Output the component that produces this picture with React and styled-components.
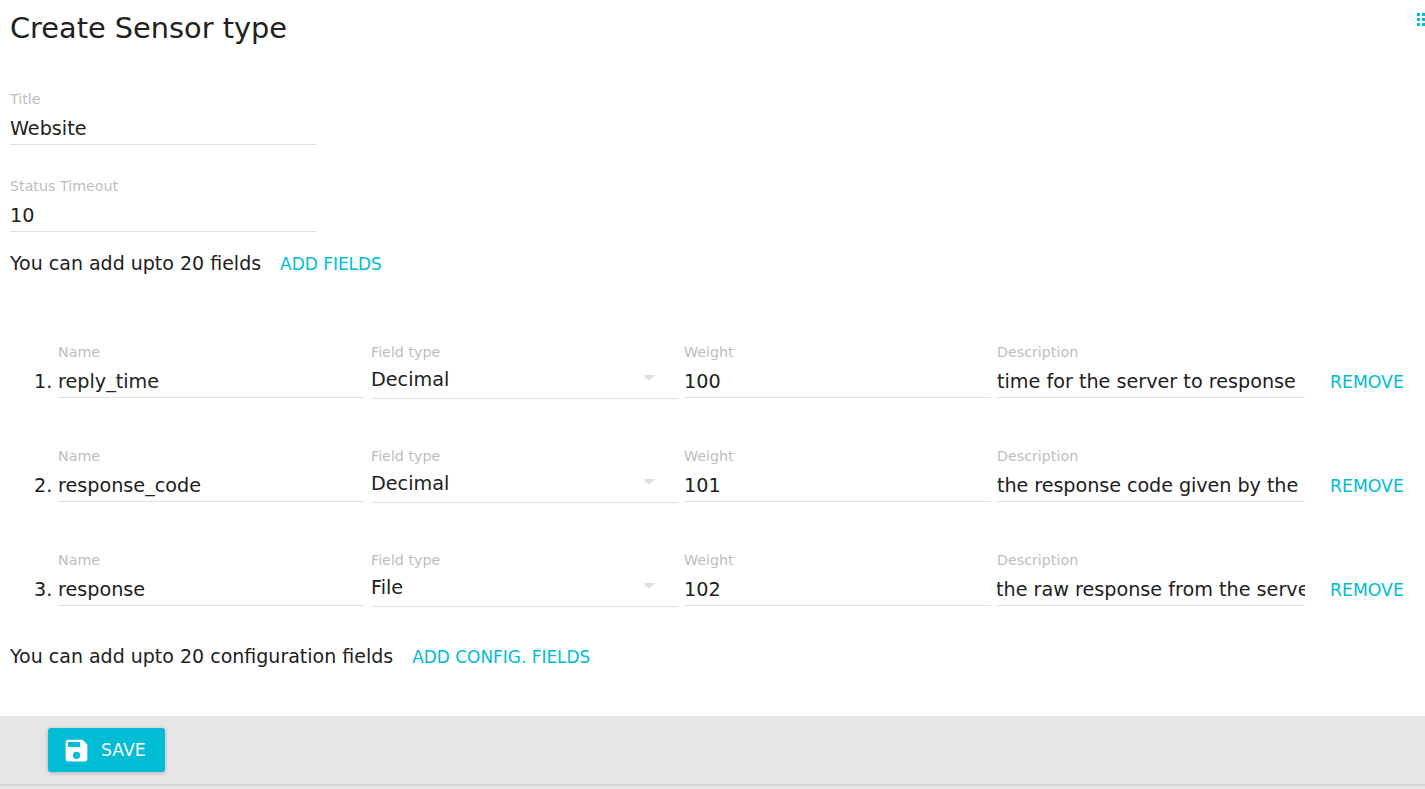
import React from "react";
import styled, { createGlobalStyle } from "styled-components";

const Global = createGlobalStyle`
  html, body { margin: 0; padding: 0; background: #fff; }
  body { font-family: "DejaVu Sans", sans-serif; color: #212121; overflow: hidden; }
`;
const Page = styled.div`
  width: 1425px; height: 789px; display: flex; flex-direction: column; position: relative; overflow: hidden;
`;
const Content = styled.div`
  height: 716px; padding: 0 10px; box-sizing: border-box; flex: none;
`;
const Heading = styled.h1`
  margin: 0; padding-top: 8px; height: 91px; box-sizing: border-box; font-size: 28.8px; line-height: 40px; font-weight: 400; color: #212121;
`;
const Field = styled.div`
  width: ${p => p.$w}px; flex: none; height: ${p => p.$h || 54}px;
`;
const Label = styled.div`
  font-size: 14.25px; line-height: 16px; color: #bdbdbd; height: 16px; white-space: nowrap;
`;
const Value = styled.div`
  font-size: 19.2px; line-height: 26px; color: #212121; white-space: nowrap; overflow: hidden;
  border-bottom: 1px solid #e0e0e0; position: relative; box-sizing: content-box;
  margin-top: ${p => p.$select ? 6 : 8}px;
  padding-top: 1px;
  height: ${p => p.$select ? 31 : 28}px;
  text-indent: ${p => p.$indent || 0}px;
  letter-spacing: ${p => p.$tracking || 0}px;
`;
const Spacer = styled.div` height: ${p => p.$h}px; `;
const Line = styled.div`
  display: flex; align-items: center; height: 40px; font-size: 19px;
`;
const Link = styled.span`
  color: #00bcd4; font-size: 16.95px; margin-left: ${p => p.$ml || 0}px; margin-top: 2px; white-space: nowrap;
`;
const RemoveLink = styled(Link)`
  line-height: 26px; padding-top: 25px; margin-left: 19px; margin-top: 0; font-size: 17.28px;
`;
const Rows = styled.div` display: flex; flex-direction: column; gap: 20px; `;
const Row = styled.div`
  display: flex; gap: 6px; align-items: flex-start; height: 84px; padding-left: 24px;
`;
const Num = styled.div`
  width: 24px; flex: none; margin-right: -6px; font-size: 19.2px; line-height: 26px; padding-top: 25px; text-align: right; padding-right: 6px; box-sizing: border-box; white-space: nowrap;
`;
const Caret = styled.span`
  position: absolute; right: 23px; top: 9px; width: 0; height: 0;
  border-left: 6px solid transparent; border-right: 6px solid transparent; border-top: 6px solid #e0e0e0;
`;
const Footer = styled.div`
  flex: 1; background: #e6e6e6; padding: 12px 48px;
  position: relative;
`;
const SaveButton = styled.button`
  height: 44px; width: 117px; border: 0; border-radius: 3px; background: #00bcd4; color: #fff; font: 400 17.28px "DejaVu Sans", sans-serif;
  display: flex; align-items: center; gap: 10px; padding: 0 0 0 14px; box-shadow: 0 1px 4px rgba(0,0,0,.25);
`;
const Rule = styled.div`
  position: absolute; left: 0; right: 0; bottom: 3px; height: 2px; background: #d4d4d4;
`;
const Dots = styled.svg`
  position: absolute; top: 13px; right: 0;
`;
const rows = [
  ["reply_time", "Decimal", "100", "time for the server to response", 0, 0],
  ["response_code", "Decimal", "101", "the response code given by the", 0, -0.07],
  ["response", "File", "102", "the raw response from the server", -1, 0],
];
export default function App() {
  return (
    <Page>
      <Global />
      <Content>
        <Heading>Create Sensor type</Heading>
        <Field $w={307} $h={87}><Label>Title</Label><Value>Website</Value></Field>
        <Field $w={307} $h={65}><Label>Status Timeout</Label><Value>10</Value></Field>
        <Line>You can add upto 20 fields<Link $ml={19}>ADD FIELDS</Link></Line>
        <Spacer $h={61} />
        <Rows>
          {rows.map((r, i) => (
            <Row key={r[0]}>
              <Num>{i + 1}.</Num>
              <Field $w={307}><Label>Name</Label><Value>{r[0]}</Value></Field>
              <Field $w={307}><Label>Field type</Label><Value $select>{r[1]}<Caret /></Value></Field>
              <Field $w={307}><Label>Weight</Label><Value>{r[2]}</Value></Field>
              <Field $w={308}><Label>Description</Label><Value $indent={r[4]} $tracking={r[5]}>{r[3]}</Value></Field>
              <RemoveLink>REMOVE</RemoveLink>
            </Row>
          ))}
        </Rows>
        <Line>You can add upto 20 configuration fields<Link $ml={19}>ADD CONFIG. FIELDS</Link></Line>
      </Content>
      <Footer>
        <SaveButton>
          <svg width="29" height="29" viewBox="0 0 24 24" fill="#fff"><path d="M17 3H5a2 2 0 0 0-2 2v14a2 2 0 0 0 2 2h14a2 2 0 0 0 2-2V7l-4-4zm-5 16a3 3 0 1 1 0-6 3 3 0 0 1 0 6zm3-10H5V5h10v4z"/></svg>
          SAVE
        </SaveButton>
        <Rule />
      </Footer>
      <Dots width="8" height="14" viewBox="0 0 8 14" fill="#00bcd4">
        {[0,5,10].flatMap(y => [0,5].map(x => <rect key={x+"-"+y} x={x} y={y} width="3" height="3" />))}
      </Dots>
    </Page>
  );
}
